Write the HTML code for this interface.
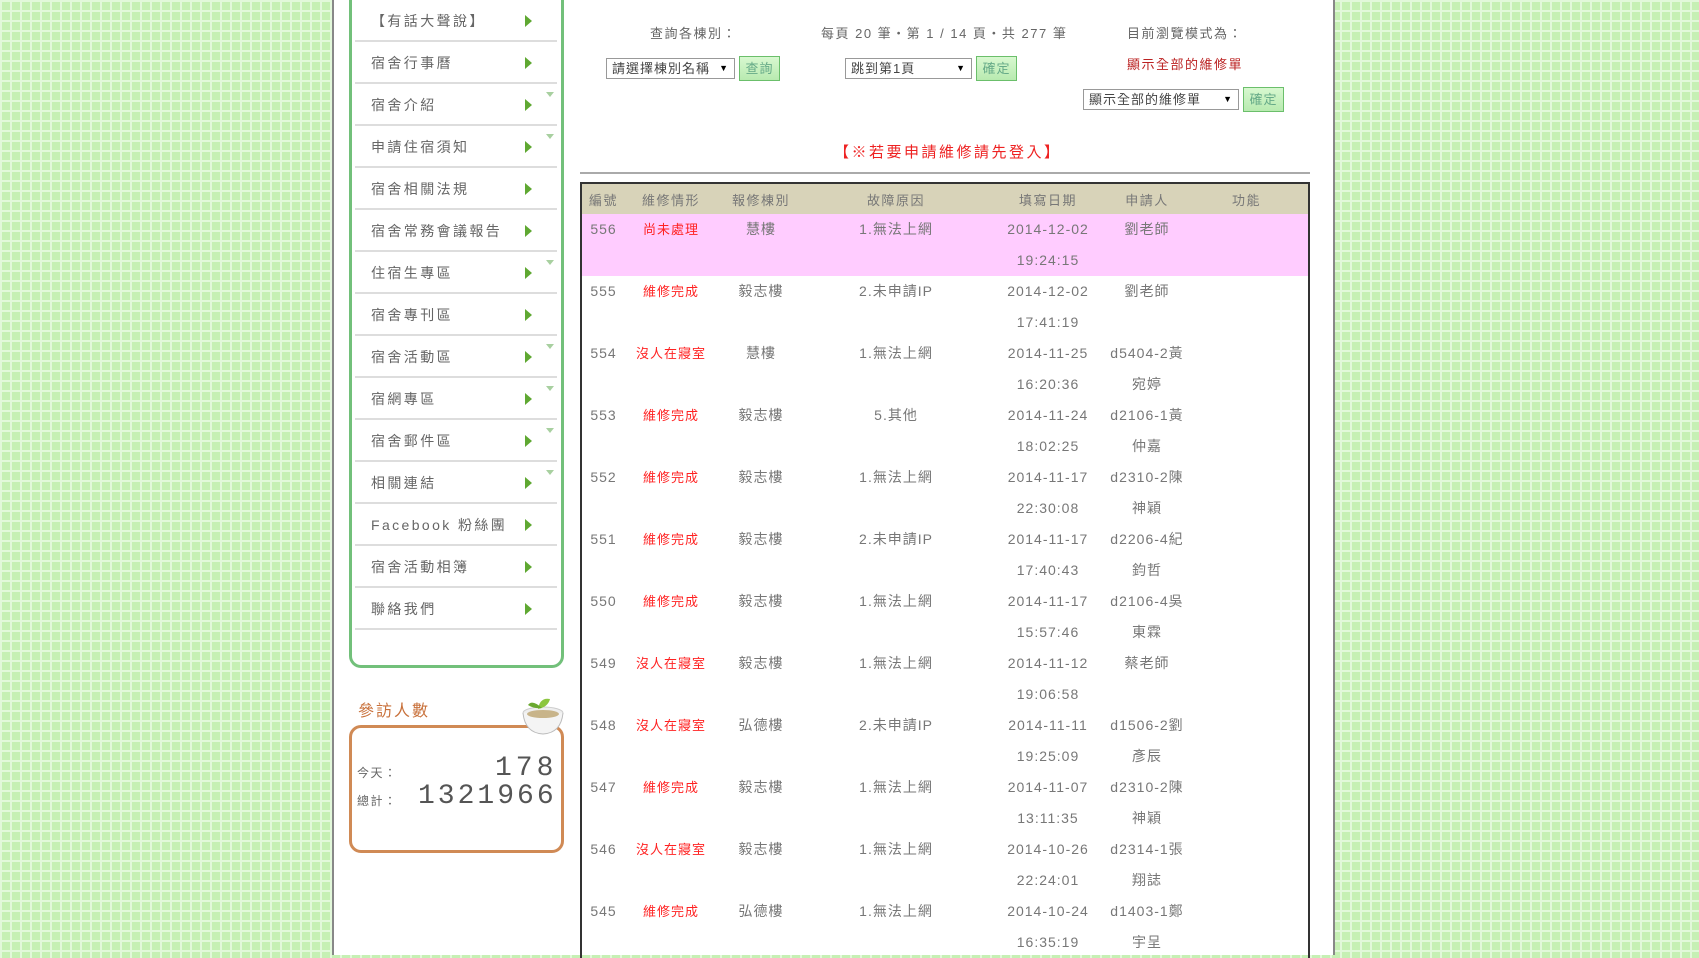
<!DOCTYPE html>
<html><head><meta charset="utf-8"><style>
*{margin:0;padding:0;box-sizing:border-box}
body{width:1699px;height:955px;overflow:hidden;position:relative;font-family:"Liberation Sans","Noto Sans CJK TC",sans-serif;color:#666;
background-color:#c6f0b4;background-image:linear-gradient(#e2f8da 2px,transparent 2px),linear-gradient(90deg,#e2f8da 2px,transparent 2px);background-size:10px 10px}
.main{position:absolute;left:332px;top:0;width:1003px;height:955px;background:#fff;border-left:2px solid #888;border-right:2px solid #888}
.menu{position:absolute;left:349px;top:-10px;width:215px;height:678px;border:3px solid #72c07a;border-top:none;border-radius:0 0 12px 12px;background:#fff}
.item{position:absolute;left:355px;width:202px;height:42px;border-bottom:2px solid #ddd;font-size:14px;letter-spacing:2.4px;line-height:42px;padding-left:16px;color:#666}
.item .ar{position:absolute;left:170px;top:15px;width:0;height:0;border-left:7px solid #5fa832;border-top:6px solid transparent;border-bottom:6px solid transparent}
.item .dn{position:absolute;left:191px;top:8px;width:0;height:0;border-top:5px solid #a8d0a0;border-left:4px solid transparent;border-right:4px solid transparent}
.t{position:absolute;font-size:13px;letter-spacing:1.5px;white-space:nowrap}
.sel{position:absolute;height:21px;border:1px solid #999;background:#fff;font-size:13px;padding-left:5px;line-height:19px;color:#444;letter-spacing:1px}
.sel:after{content:"▼";position:absolute;right:5px;top:0;font-size:9px;color:#000}
.btn{position:absolute;height:25px;border:1px solid #6bbf6b;background:linear-gradient(#d8f8d0,#b8eab0);font-size:13px;line-height:23px;text-align:center;color:#6a8;letter-spacing:1px}
table{position:absolute;left:580px;top:182px;width:728px;border-collapse:collapse;border-left:2px solid #333;border-right:2px solid #333;border-top:2px solid #333;table-layout:fixed}
th{background:#d8d3b9;height:31px;font-weight:normal;font-size:13px;letter-spacing:1.5px;color:#777}
td{text-align:center;vertical-align:top;font-size:14px;line-height:31px;height:62px;letter-spacing:1px;color:#777}
td.r{color:#f22;font-size:13px}
tr.p td{background:#fcf}
</style></head><body>
<div class="main"></div>
<div class="menu"></div>
<div class="item" style="top:0">【有話大聲說】<span class="ar"></span></div>
<div class="item" style="top:42px">宿舍行事曆<span class="ar"></span></div>
<div class="item" style="top:84px">宿舍介紹<span class="ar"></span><span class="dn"></span></div>
<div class="item" style="top:126px">申請住宿須知<span class="ar"></span><span class="dn"></span></div>
<div class="item" style="top:168px">宿舍相關法規<span class="ar"></span></div>
<div class="item" style="top:210px">宿舍常務會議報告<span class="ar"></span></div>
<div class="item" style="top:252px">住宿生專區<span class="ar"></span><span class="dn"></span></div>
<div class="item" style="top:294px">宿舍專刊區<span class="ar"></span></div>
<div class="item" style="top:336px">宿舍活動區<span class="ar"></span><span class="dn"></span></div>
<div class="item" style="top:378px">宿網專區<span class="ar"></span><span class="dn"></span></div>
<div class="item" style="top:420px">宿舍郵件區<span class="ar"></span><span class="dn"></span></div>
<div class="item" style="top:462px">相關連結<span class="ar"></span><span class="dn"></span></div>
<div class="item" style="top:504px">Facebook 粉絲團<span class="ar"></span></div>
<div class="item" style="top:546px">宿舍活動相簿<span class="ar"></span></div>
<div class="item" style="top:588px">聯絡我們<span class="ar"></span></div>

<div class="t" style="left:358px;top:697px;font-size:16px;color:#c8703a;letter-spacing:2px">參訪人數</div>
<div style="position:absolute;left:349px;top:725px;width:215px;height:128px;border:3px solid #d08a55;border-radius:12px;background:#fff"></div>
<svg style="position:absolute;left:520px;top:693px" width="46" height="52"><ellipse cx="23" cy="20" rx="20" ry="6" fill="#eee" stroke="#ccc"/><path d="M3 20 Q5 40 23 41 Q41 40 43 20" fill="#f4f4f4" stroke="#bbb"/><ellipse cx="23" cy="21" rx="16" ry="4" fill="#c8b48a"/><path d="M18 16 Q20 4 30 6 Q28 14 18 16Z" fill="#8cc63f"/><path d="M22 15 Q12 6 8 12 Q14 16 22 15Z" fill="#6aa82f"/></svg>
<div class="t" style="left:357px;top:764px;font-size:12px">今天：</div>
<div class="t" style="left:357px;top:792px;font-size:12px">總計：</div>
<div class="t" style="left:495px;top:753px;font-size:28px;font-family:'Liberation Mono',monospace;letter-spacing:4px;color:#555;font-weight:300">178</div>
<div class="t" style="left:418px;top:781px;font-size:28px;font-family:'Liberation Mono',monospace;letter-spacing:3px;color:#555">1321966</div>

<div class="t" style="left:650px;top:23px">查詢各棟別：</div>
<div class="t" style="left:821px;top:23px">每頁 20 筆‧第 1 / 14 頁‧共 277 筆</div>
<div class="t" style="left:1127px;top:23px">目前瀏覽模式為：</div>
<div class="t" style="left:1127px;top:54px;color:#b22">顯示全部的維修單</div>
<div class="sel" style="left:606px;top:58px;width:129px">請選擇棟別名稱</div>
<div class="btn" style="left:739px;top:56px;width:41px">查詢</div>
<div class="sel" style="left:845px;top:58px;width:127px">跳到第1頁</div>
<div class="btn" style="left:976px;top:56px;width:41px">確定</div>
<div class="sel" style="left:1083px;top:89px;width:156px">顯示全部的維修單</div>
<div class="btn" style="left:1243px;top:87px;width:41px">確定</div>
<div class="t" style="left:834px;top:141px;color:#e22;font-size:15px;letter-spacing:2.5px">【※若要申請維修請先登入】</div>
<div style="position:absolute;left:580px;top:172px;width:730px;height:2px;background:#aaa"></div>

<table>
<colgroup><col style="width:44px"><col style="width:92px"><col style="width:88px"><col style="width:182px"><col style="width:122px"><col style="width:76px"><col style="width:124px"></colgroup>
<tr><th>編號</th><th>維修情形</th><th>報修棟別</th><th>故障原因</th><th>填寫日期</th><th>申請人</th><th>功能</th></tr>
<tr class="p"><td>556</td><td class="r">尚未處理</td><td>慧樓</td><td>1.無法上網</td><td>2014-12-02<br>19:24:15</td><td>劉老師</td><td></td></tr>
<tr><td>555</td><td class="r">維修完成</td><td>毅志樓</td><td>2.未申請IP</td><td>2014-12-02<br>17:41:19</td><td>劉老師</td><td></td></tr>
<tr><td>554</td><td class="r">沒人在寢室</td><td>慧樓</td><td>1.無法上網</td><td>2014-11-25<br>16:20:36</td><td>d5404-2黃<br>宛婷</td><td></td></tr>
<tr><td>553</td><td class="r">維修完成</td><td>毅志樓</td><td>5.其他</td><td>2014-11-24<br>18:02:25</td><td>d2106-1黃<br>仲嘉</td><td></td></tr>
<tr><td>552</td><td class="r">維修完成</td><td>毅志樓</td><td>1.無法上網</td><td>2014-11-17<br>22:30:08</td><td>d2310-2陳<br>神穎</td><td></td></tr>
<tr><td>551</td><td class="r">維修完成</td><td>毅志樓</td><td>2.未申請IP</td><td>2014-11-17<br>17:40:43</td><td>d2206-4紀<br>鈞哲</td><td></td></tr>
<tr><td>550</td><td class="r">維修完成</td><td>毅志樓</td><td>1.無法上網</td><td>2014-11-17<br>15:57:46</td><td>d2106-4吳<br>東霖</td><td></td></tr>
<tr><td>549</td><td class="r">沒人在寢室</td><td>毅志樓</td><td>1.無法上網</td><td>2014-11-12<br>19:06:58</td><td>蔡老師</td><td></td></tr>
<tr><td>548</td><td class="r">沒人在寢室</td><td>弘德樓</td><td>2.未申請IP</td><td>2014-11-11<br>19:25:09</td><td>d1506-2劉<br>彥辰</td><td></td></tr>
<tr><td>547</td><td class="r">維修完成</td><td>毅志樓</td><td>1.無法上網</td><td>2014-11-07<br>13:11:35</td><td>d2310-2陳<br>神穎</td><td></td></tr>
<tr><td>546</td><td class="r">沒人在寢室</td><td>毅志樓</td><td>1.無法上網</td><td>2014-10-26<br>22:24:01</td><td>d2314-1張<br>翔誌</td><td></td></tr>
<tr><td>545</td><td class="r">維修完成</td><td>弘德樓</td><td>1.無法上網</td><td>2014-10-24<br>16:35:19</td><td>d1403-1鄭<br>宇呈</td><td></td></tr>
</table>
</body></html>
